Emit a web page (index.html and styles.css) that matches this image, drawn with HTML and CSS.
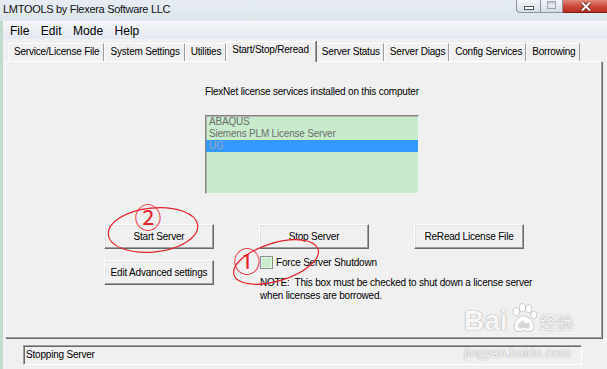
FILE: index.html
```html
<!DOCTYPE html>
<html lang="en">
<head>
    <meta charset="UTF-8">
    <title>LMTOOLS by Flexera Software LLC</title>
    <link rel="stylesheet" href="styles.css">
</head>
<body>
    <div class="window">
        <div class="titlebar">
            <span class="title">LMTOOLS by Flexera Software LLC</span>
            <div class="capbtns">
                <div class="capbtn min"><span class="min-glyph"></span></div>
                <div class="capbtn max"><span class="max-glyph"></span></div>
                <div class="capbtn close">
                    <svg width="12" height="9" viewBox="0 0 12 9"><path d="M2 0.5 L10 8.5 M10 0.5 L2 8.5" stroke="#5a1a14" stroke-width="3.4"/><path d="M2 0.5 L10 8.5 M10 0.5 L2 8.5" stroke="#fff" stroke-width="2"/></svg>
                </div>
            </div>
        </div>

        <div class="frame">
            <div class="menubar">
                <span>File</span>
                <span>Edit</span>
                <span>Mode</span>
                <span>Help</span>
            </div>

            <div class="body">
                <div class="tabstrip">
                    <div class="tab">Service/License File</div>
                    <div class="tab">System Settings</div>
                    <div class="tab">Utilities</div>
                    <div class="tab active">Start/Stop/Reread</div>
                    <div class="tab">Server Status</div>
                    <div class="tab">Server Diags</div>
                    <div class="tab">Config Services</div>
                    <div class="tab">Borrowing</div>
                </div>

                <div class="panel">
                    <div class="services">
                        <p class="caption">FlexNet license services installed on this computer</p>
                        <ul class="listbox">
                            <li>ABAQUS</li>
                            <li>Siemens PLM License Server</li>
                            <li class="selected">UG</li>
                        </ul>
                    </div>

                    <div class="controls">
                        <button class="btn">Start Server</button>
                        <button class="btn">Stop Server</button>
                        <button class="btn">ReRead License File</button>
                        <button class="btn btn-edit">Edit Advanced settings</button>
                        <div class="options">
                            <label class="check"><span class="box"></span>Force Server Shutdown</label>
                            <p class="note">NOTE:&nbsp; This box must be checked to shut down a license server<br>when licenses are borrowed.</p>
                        </div>
                    </div>
                </div>

                <div class="status">Stopping Server</div>
            </div>
        </div>

        <!-- 百度经验 水印 -->
        <div class="watermark">
            <div class="wm-logo">
                <span class="wm-bai">Bai</span>
                <svg class="wm-paw" width="31" height="32" viewBox="0 0 30 30">
                    <g fill="rgba(255,255,255,.9)" stroke="rgba(130,130,130,.45)" stroke-width=".8">
                        <ellipse cx="8" cy="9" rx="3" ry="4"/>
                        <ellipse cx="14" cy="5" rx="3" ry="4"/>
                        <ellipse cx="20" cy="6" rx="3" ry="4"/>
                        <ellipse cx="25" cy="12" rx="3" ry="3.6"/>
                        <path d="M6 24 C6 17 11 13 15 13 C20 13 25 18 25 24 C25 28 20 29 15 27 C10 29 6 28 6 24 Z"/>
                    </g>
                    <text x="15.5" y="25" font-size="9" font-weight="bold" text-anchor="middle" fill="#e2e2e2">du</text>
                </svg>
                <span class="wm-cn">经验</span>
            </div>
            <div class="wm-url">jingyan.baidu.com</div>
        </div>

        <!-- red marks -->
        <svg class="marks" width="607" height="369" viewBox="0 0 607 369">
            <ellipse cx="153" cy="230" rx="45" ry="22" transform="rotate(-6 153 230)" fill="none" stroke="#e5222b" stroke-width="1.2"/>
            <ellipse cx="276" cy="262" rx="44" ry="19" transform="rotate(-17 276 262)" fill="none" stroke="#e5222b" stroke-width="1.2"/>
            <text x="148" y="228" class="mark-num">②</text>
            <text x="247" y="272" class="mark-num">①</text>
        </svg>
    </div>
</body>
</html>
```

FILE: styles.css
```css
* {
    box-sizing: border-box;
}
body {
    margin: 0;
    background: #f0f0f0;
    font-family: "Liberation Sans", Arial, sans-serif;
    color: #000;
}
.window {
    position: relative;
    width: 607px;
    height: 369px;
    overflow: hidden;
    background: #f0f0f0;
}

/* title bar */
.titlebar {
    height: 21px;
    display: flex;
    justify-content: space-between;
    align-items: flex-start;
    background: linear-gradient(#e6ecf1, #dde6ec);
}
.title {
    font-size: 11px;
    letter-spacing: -0.3px;
    line-height: 19px;
    padding-left: 3px;
    color: #111;
}
.capbtns {
    display: flex;
    margin-right: -8px;
}
.capbtn {
    height: 13px;
    border: 1px solid #8a93a0;
    border-top: 0;
    display: flex;
    align-items: center;
    justify-content: center;
    background: linear-gradient(#f3f5f8, #d6dce5);
}
.min {
    width: 25px;
    border-radius: 0 0 0 4px;
}
.max {
    width: 22px;
    border-left: 0;
}
.close {
    width: 52px;
    border-color: #7a2019;
    border-left: 0;
    background: linear-gradient(#e2897b, #cc4b3c 50%, #b92d20);
}
.min-glyph {
    width: 10px;
    height: 4px;
    margin-top: 3px;
    background: #fff;
    border: 1px solid #4a5566;
}
.max-glyph {
    width: 9px;
    height: 8px;
    border: 1px solid #9aa3ae;
    box-shadow: inset 0 2px 0 #c8ced6;
    margin-top: -2px;
}
.close svg {
    margin-left: -6px;
}

/* frame */
.frame {
    border-left: 3px solid #c1dccd;
    height: 348px;
}
.menubar {
    height: 18px;
    display: flex;
    gap: 11.5px;
    padding-left: 7px;
    font-size: 12px;
    line-height: 18px;
    border-top: 1px solid #f7f8fb;
    background: linear-gradient(#f4f5f9, #e4e8f1);
}
.body {
    padding: 2px 5px 0 2px;
}

/* tabs */
.tabstrip {
    height: 20px;
    display: flex;
    align-items: flex-end;
    padding-left: 3px;
}
.tab {
    height: 18px;
    padding: 0 4px 0 5px;
    font-size: 10px;
    letter-spacing: -0.2px;
    line-height: 16px;
    white-space: nowrap;
    border-top: 1px solid #fcfcfc;
    border-left: 1px solid #fcfcfc;
    border-right: 1px solid #9c9c9c;
}
.tab.active {
    height: 21px;
    padding: 0 6px 0 5px;
    line-height: 16px;
    margin-bottom: -1px;
    position: relative;
    z-index: 1;
    background: #f0f0f0;
    border-top-color: #fff;
    border-left-color: #fff;
    border-right-color: #a0a0a0;
    box-shadow: 1px 0 0 #696969;
}
.tab.active ~ .tab {
    padding-right: 3px;
}
.panel {
    height: 277px;
    padding-top: 24px;
    border: 1px solid;
    border-color: #fff #a0a0a0 #a0a0a0 #fff;
    box-shadow: 1px 1px 0 #696969;
}

/* service list */
.services {
    margin-left: 199px;
    width: 214px;
}
.caption {
    margin: 0;
    font-size: 10px;
    letter-spacing: -0.2px;
    line-height: 12px;
    white-space: nowrap;
}
.listbox {
    list-style: none;
    margin: 17px 0 0 0;
    padding: 0;
    height: 79px;
    background: #c8ebcb;
    border: 1px solid;
    border-color: #828282 #f4f4f4 #f4f4f4 #828282;
    box-shadow: inset 1px 1px 0 #b2b2b2;
}
.listbox li {
    font-size: 10px;
    letter-spacing: -0.2px;
    line-height: 12px;
    padding-left: 3px;
    color: #6e6e6e;
}
.listbox li.selected {
    background: #3399ff;
    color: #9aa6b6;
}

/* buttons */
.controls {
    display: grid;
    grid-template-columns: 110px 110px 110px;
    grid-template-rows: 25px auto;
    column-gap: 45px;
    row-gap: 7px;
    margin: 30px 0 0 98px;
}
.btn {
    height: 25px;
    padding: 0;
    font-family: "Liberation Sans", Arial, sans-serif;
    font-size: 10px;
    letter-spacing: -0.2px;
    color: #000;
    background: #f0f0f0;
    border: 1px solid;
    border-color: #fff #696969 #696969 #fff;
    box-shadow: inset -1px -1px 0 #a0a0a0, inset 1px 1px 0 #e3e3e3;
}
.btn-edit {
    margin-top: 4px;
}
.options {
    grid-column: 2 / span 2;
    padding-left: 1px;
    font-size: 10px;
    letter-spacing: -0.2px;
}
.check {
    display: flex;
    align-items: center;
    gap: 3px;
    height: 13px;
    line-height: 13px;
}
.box {
    width: 13px;
    height: 13px;
    background: #c8ebcb;
    border: 1px solid #8e8f8f;
    box-shadow: inset 0 0 0 1px #e6f4e6;
}
.note {
    margin: 7px 0 0 0;
    line-height: 13px;
    white-space: nowrap;
}

/* status line */
.status {
    margin: 7px 0 0 18px;
    width: 559px;
    height: 20px;
    padding-left: 2px;
    font-size: 10px;
    letter-spacing: -0.2px;
    line-height: 18px;
    border: 1px solid;
    border-color: #a0a0a0 #fff #fff #a0a0a0;
    box-shadow: inset 1px 1px 0 #696969;
}

/* watermark */
.watermark {
    position: absolute;
    left: 464px;
    top: 300px;
    width: 112px;
    color: rgba(255, 255, 255, .95);
    text-shadow: 0 0 1px rgba(90, 90, 90, .6), 0 0 2px rgba(150, 150, 150, .35);
}
.wm-logo {
    display: flex;
    align-items: flex-end;
    height: 36px;
}
.wm-bai {
    font-size: 28px;
    font-weight: bold;
    line-height: 30px;
}
.wm-paw {
    margin: 0 1px 2px 0;
}
.wm-cn {
    font-family: "Noto Sans CJK SC", sans-serif;
    font-size: 17px;
    line-height: 28px;
}
.wm-url {
    margin-top: 9px;
    font-size: 13px;
    letter-spacing: 0.1px;
}

/* annotations */
.marks {
    position: absolute;
    left: 0;
    top: 0;
    pointer-events: none;
}
.mark-num {
    font-family: "Noto Sans CJK SC", "DejaVu Sans", sans-serif;
    font-size: 27px;
    fill: #e5222b;
    text-anchor: middle;
}
```
